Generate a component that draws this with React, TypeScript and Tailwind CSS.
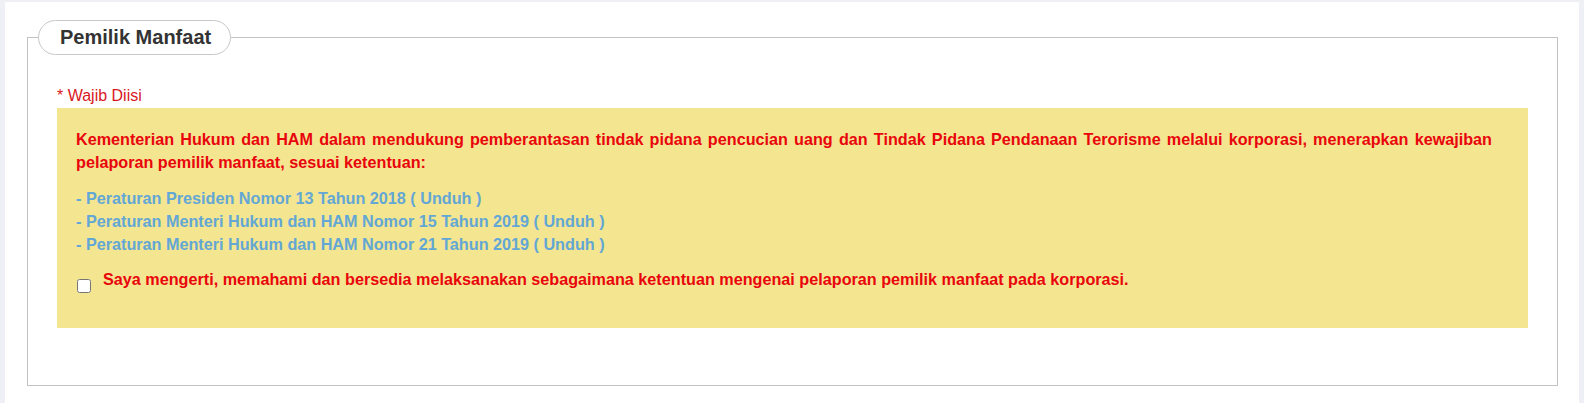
import React from "react";

export default function App() {
  const links = [
    "- Peraturan Presiden Nomor 13 Tahun 2018 ( Unduh )",
    "- Peraturan Menteri Hukum dan HAM Nomor 15 Tahun 2019 ( Unduh )",
    "- Peraturan Menteri Hukum dan HAM Nomor 21 Tahun 2019 ( Unduh )",
  ];
  return (
    <div
      className="w-[1584px] h-[403px] bg-[#eef0f5] pt-[2px] px-[5px] overflow-hidden"
      style={{ fontFamily: '"Liberation Sans", Arial, sans-serif' }}
    >
      <div className="bg-white h-[401px] pt-[18px] pl-[22px] pr-[21px]">
        <fieldset className="border border-[#c2c2c2] m-0 p-0">
          <legend className="ml-[10px] border border-[#c8c8c8] rounded-full pl-[21px] pr-[19px] h-[35px] leading-[33px] text-[20px] font-bold text-[#333333]">
            Pemilik Manfaat
          </legend>
          <div className="px-[29px] pb-[57px]">
            <div className="mt-[29px] text-[16px] leading-[24px] text-[#d9181e]">
              * Wajib Diisi
            </div>
            <div className="bg-[#f4e591] pl-[19px] pr-[36px] pt-[20px] pb-[35px] text-[16.2px] font-bold leading-[23.3px]">
              <p className="text-[#e8060c] text-justify mb-[12px]">
                Kementerian Hukum dan HAM dalam mendukung pemberantasan tindak pidana pencucian uang dan Tindak Pidana Pendanaan Terorisme melalui korporasi, menerapkan kewajiban pelaporan pemilik manfaat, sesuai ketentuan:
              </p>
              <div className="text-[#63a7d5] mb-[12px]">
                {links.map((l) => (
                  <div key={l}>{l}</div>
                ))}
              </div>
              <label className="flex items-start text-[#e8060c]">
                <input
                  type="checkbox"
                  className="w-[14px] h-[14px] m-0 mt-[11px] ml-[1px] mr-[12px] shrink-0"
                />
                <span>
                  Saya mengerti, memahami dan bersedia melaksanakan sebagaimana ketentuan mengenai pelaporan pemilik manfaat pada korporasi.
                </span>
              </label>
            </div>
          </div>
        </fieldset>
      </div>
    </div>
  );
}
